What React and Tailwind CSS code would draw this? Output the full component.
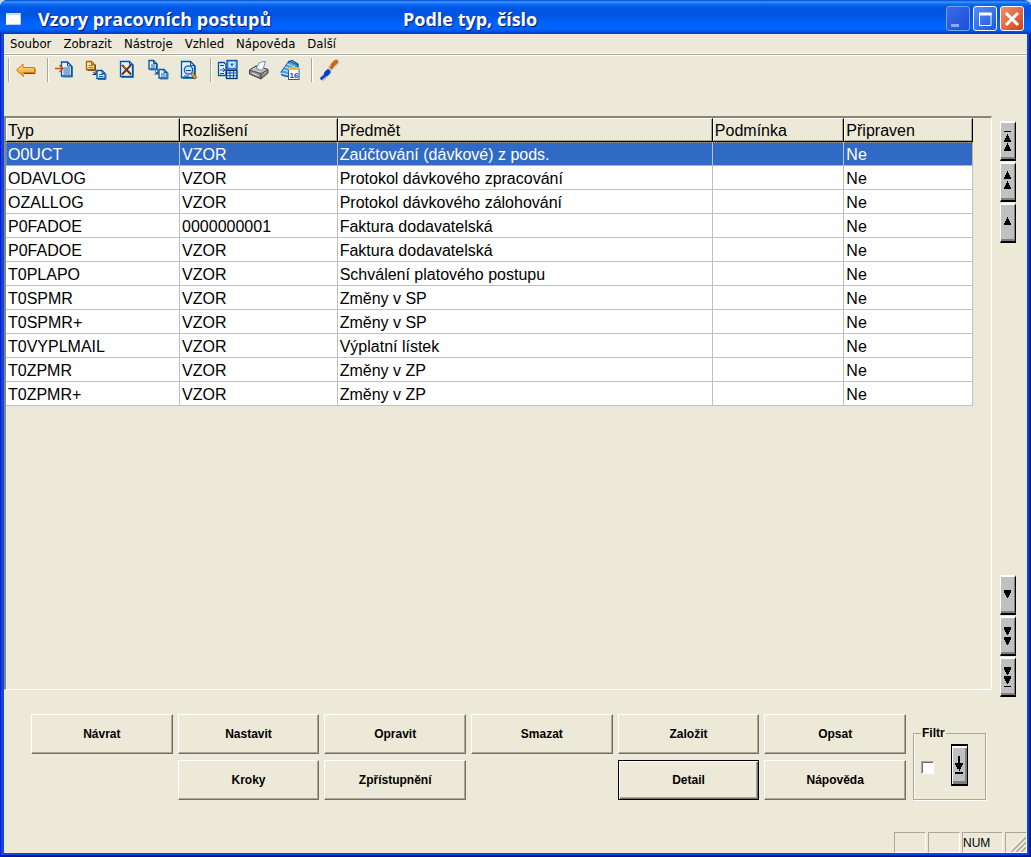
import React from 'react';

const MENU = ['Soubor', 'Zobrazit', 'Nástroje', 'Vzhled', 'Nápověda', 'Další'];

const COLUMNS = [
  { label: 'Typ', width: '18%' },
  { label: 'Rozlišení', width: '16.3%' },
  { label: 'Předmět', width: '38.8%' },
  { label: 'Podmínka', width: '13.6%' },
  { label: 'Připraven', width: '13.3%' },
];

const ROWS = [
  ['O0UCT', 'VZOR', 'Zaúčtování (dávkové) z pods.', '', 'Ne'],
  ['ODAVLOG', 'VZOR', 'Protokol dávkového zpracování', '', 'Ne'],
  ['OZALLOG', 'VZOR', 'Protokol dávkového zálohování', '', 'Ne'],
  ['P0FADOE', '0000000001', 'Faktura dodavatelská', '', 'Ne'],
  ['P0FADOE', 'VZOR', 'Faktura dodavatelská', '', 'Ne'],
  ['T0PLAPO', 'VZOR', 'Schválení platového postupu', '', 'Ne'],
  ['T0SPMR', 'VZOR', 'Změny v SP', '', 'Ne'],
  ['T0SPMR+', 'VZOR', 'Změny v SP', '', 'Ne'],
  ['T0VYPLMAIL', 'VZOR', 'Výplatní lístek', '', 'Ne'],
  ['T0ZPMR', 'VZOR', 'Změny v ZP', '', 'Ne'],
  ['T0ZPMR+', 'VZOR', 'Změny v ZP', '', 'Ne'],
];

const ACTIONS = [
  'Návrat', 'Nastavit', 'Opravit', 'Smazat', 'Založit', 'Opsat',
  null, 'Kroky', 'Zpřístupnění', null, 'Detail', 'Nápověda',
];

const Icon = ({ children }) => (
  <svg width="22" height="22" viewBox="0 0 22 22" fill="none" aria-hidden="true">
    {children}
  </svg>
);

// sheet of paper with a folded corner and text lines
const Sheet = ({ x, y, w, h, stroke = '#0a4fa8', fill = '#e4f2ff', shadow = '#2a8cb0', fold = 3, lines = 2 }) => (
  <g>
    <path d={`M${x + 1} ${y + h + 1}H${x + w + 1}V${y + fold}`} stroke={shadow} />
    <path
      d={`M${x} ${y}H${x + w - fold}L${x + w} ${y + fold}V${y + h}H${x}Z`}
      fill={fill}
      stroke={stroke}
      strokeWidth="1.3"
    />
    <path d={`M${x + w - fold} ${y}V${y + fold}H${x + w}`} stroke={stroke} />
    {Array.from({ length: lines }, (_, i) => (
      <path key={i} d={`M${x + 2} ${y + h - 2 - i * 2}H${x + w - 1.5}`} stroke={stroke} strokeWidth="0.9" />
    ))}
  </g>
);

const BackIcon = () => (
  <Icon>
    <defs>
      <linearGradient id="back" x1="0" y1="0" x2="0" y2="1">
        <stop offset="0" stopColor="#ffe08a" />
        <stop offset="1" stopColor="#ff9a10" />
      </linearGradient>
    </defs>
    <path d="M9 17.5L2.5 12M9 14.5H20V9.5" stroke="#7b4a12" />
    <path d="M1.5 11L8 5V8.5H19.5V13.5H8V17Z" fill="url(#back)" stroke="#d47b10" />
  </Icon>
);

const InsertIcon = () => (
  <Icon>
    <Sheet x={7.5} y={3} w={10} h={14} fold={4} lines={4} />
    <path d="M1 9.5H9M5.5 6L9 9.5L5.5 13" stroke="#c4501c" strokeWidth="1.5" />
  </Icon>
);

const CopyIcon = () => (
  <Icon>
    <Sheet x={1.5} y={2.5} w={8} h={8} stroke="#a8640c" fill="#ffe9a8" shadow="#7b4a12" />
    <Sheet x={12} y={11.5} w={8} h={8} />
    <path d="M8 13L11 15M11 11.5V15.5H7.5" stroke="#062e6c" />
  </Icon>
);

const DeleteIcon = () => (
  <Icon>
    <Sheet x={4.5} y={2.5} w={12} h={15} fold={3} lines={0} />
    <path d="M6 6L15 15.5M15 6L6 15.5" stroke="#6b3208" strokeWidth="2" />
    <path d="M6.5 6.5L10 10" stroke="#c4702c" />
  </Icon>
);

const MoveIcon = () => (
  <Icon>
    <Sheet x={2} y={1.5} w={7.5} h={8.5} />
    <Sheet x={12} y={10.5} w={8} h={8.5} />
    <path d="M8 12.5L11 14.5M11 11V15H7.5" stroke="#062e6c" />
  </Icon>
);

const PreviewIcon = () => (
  <Icon>
    <Sheet x={3.5} y={2.5} w={13} h={16} fold={4} lines={0} />
    <path d="M13.5 14L18 19.5" stroke="#8a4b08" strokeWidth="3" />
    <path d="M13.5 14L17.5 19" stroke="#ffb02c" strokeWidth="1.6" />
    <circle cx="10.5" cy="11" r="4.2" fill="#bfe4ff" stroke="#1560b8" strokeWidth="1.3" />
    <path d="M8 11.5H13M6 17H11" stroke="#0a4fa8" />
  </Icon>
);

const ModulesIcon = () => (
  <Icon>
    <path d="M1.5 3.5H7L9 5.5V16.5H1.5Z" fill="#e4f2ff" stroke="#0a4fa8" strokeWidth="1.3" />
    <path d="M3 6.5H7M3 14.5H7M3 11H7.5M6 9L8 11L6 13" stroke="#0a4fa8" />
    <rect x="10" y="1.5" width="10" height="8.5" fill="#86c4ff" stroke="#0a4fa8" strokeWidth="1.3" />
    <circle cx="15" cy="5.7" r="2.8" fill="#fff" />
    <path d="M13.5 5.5H16.5M15 4V7.5" stroke="#0a6bd6" strokeWidth="1.3" />
    <rect x="9.5" y="11.5" width="10.5" height="8" fill="#e4f2ff" stroke="#062e6c" strokeWidth="1.3" />
    <path d="M9.5 14H20M9.5 16.7H20M13 11.5V19.5M16.5 11.5V19.5" stroke="#0a4fa8" />
  </Icon>
);

const PrinterIcon = () => (
  <Icon>
    <path d="M1.5 11L8 7L20 10.5V14L13 20L1.5 15Z" fill="#8c8c8c" stroke="#3c3c3c" />
    <path d="M1.5 11L8 7L20 10.5L13 14.5Z" fill="#c8c8c8" stroke="#505050" />
    <path d="M8 9.5L11.5 3.5C13 4 14 2 17.5 2.5C16 5 17 7 14 11.5Z" fill="#f4faff" stroke="#5a8cb8" />
    <path d="M13 14.5V20" stroke="#3c3c3c" />
    <path d="M4 14L10.5 16.7" stroke="#e8e8e8" />
    <path d="M16 14.5L18 13" stroke="#e8c020" />
  </Icon>
);

const CalendarIcon = () => (
  <Icon>
    <path d="M2 13L10 2L19 6L13 18.5L3 16.5Z" fill="#4aa0dc" stroke="#0a4fa8" />
    <path d="M2 14L11 16M4 11L12 13M6 8L13 10M8 5L16 8" stroke="#d4ecff" />
    <path d="M9 3L13 1.5L19 5V9" stroke="#0a4f9c" strokeWidth="1.3" />
    <rect x="9.5" y="9.5" width="10.5" height="11" fill="#fff" stroke="#1560b8" />
    <rect x="9" y="8" width="11.5" height="3" fill="#f4b040" />
    <text x="15" y="19" textAnchor="middle" fontSize="8" fontWeight="bold" fontFamily="Liberation Sans, sans-serif" fill="#0a4fa8">16</text>
  </Icon>
);

const BrushIcon = () => (
  <Icon>
    <path d="M13 8.5L18.5 3" stroke="#c8c8cc" strokeWidth="5.5" strokeLinecap="round" />
    <path d="M5 19L10.5 13" stroke="#b8c0d4" strokeWidth="5.5" strokeLinecap="round" />
    <path d="M15 5.5L18 2.8" stroke="#d06400" strokeWidth="4" strokeLinecap="round" />
    <path d="M12.5 9.5L15 6.5" stroke="#d06400" strokeWidth="3" />
    <path d="M8.5 14.5L10 13" stroke="#0a3cd0" strokeWidth="5" strokeLinecap="round" />
    <path d="M3.5 19.5L9 15" stroke="#0a3cd0" strokeWidth="2.6" strokeLinecap="round" />
  </Icon>
);

const TOOL_GROUPS = [
  [['Zpět', BackIcon]],
  [['Vložit', InsertIcon], ['Kopírovat', CopyIcon], ['Zrušit', DeleteIcon], ['Přesunout', MoveIcon], ['Náhled', PreviewIcon]],
  [['Moduly', ModulesIcon], ['Tisk', PrinterIcon], ['Kalendář', CalendarIcon]],
  [['Barvy', BrushIcon]],
];

const WindowButton = ({ label, className, children }) => (
  <button
    aria-label={label}
    className={`flex h-[25px] w-6 items-center justify-center rounded-[3px] border ${className}`}
  >
    <svg width="22" height="22" viewBox="0 0 22 22" fill="none">{children}</svg>
  </button>
);

const TitleBar = () => (
  <header className="flex h-[34px] items-center gap-[3px] rounded-t-lg bg-[linear-gradient(180deg,#0046c8_0px,#3d95ff_2px,#0a6cf5_4px,#0055e5_8px,#0055e5_16px,#0062fa_23px,#0066ff_29px,#0056e8_31px,#0038b8_34px)] pr-[7px] pl-[6px] pt-[3px]">
    <svg width="15" height="12" viewBox="0 0 15 12" className="mr-[14px]" aria-hidden="true">
      <rect width="15" height="12" fill="#fff" />
      <rect width="15" height="2" fill="#cfe0fb" />
      <path d="M15 1V12H1" stroke="#7a9ad8" fill="none" />
    </svg>
    <h1 className="flex flex-1 font-['Open_Sans',sans-serif] text-lg font-bold leading-6 whitespace-pre text-white [text-shadow:1px_1px_1px_#0a1883]">
      <span className="w-[365px]">Vzory pracovních postupů</span>
      <span>Podle typ, číslo</span>
    </h1>
    <WindowButton label="Minimalizovat" className="border-[#7a9ff0] bg-linear-to-br from-[#3a6ae8] to-[#1a4fd8]">
      <path d="M4 17.5H12" stroke="#8fa9ee" strokeWidth="3" />
    </WindowButton>
    <WindowButton label="Maximalizovat" className="border-white bg-linear-to-br from-[#5a8cf4] to-[#1a55e0]">
      <path d="M5.5 5V17.5H17V5" stroke="#fff" />
      <path d="M5 6H17.5" stroke="#fff" strokeWidth="3" />
    </WindowButton>
    <WindowButton label="Zavřít" className="border-white bg-linear-to-br from-[#f0906c] to-[#d03c14]">
      <path d="M5 5L17 17M17 5L5 17" stroke="#fff" strokeWidth="3" />
    </WindowButton>
  </header>
);

const Separator = () => <div className="h-6 w-[2px] border-r border-l border-r-white border-l-[#aca899]" />;

const ToolBar = () => (
  <div className="flex items-center px-1 pt-[2px]">
    {TOOL_GROUPS.map((group, i) => (
      <React.Fragment key={i}>
        <Separator />
        <div className="flex pr-[6px]">
          {group.map(([label, Glyph]) => (
            <button key={label} title={label} aria-label={label} className="flex h-6 w-[31px] items-center justify-center">
              <Glyph />
            </button>
          ))}
        </div>
      </React.Fragment>
    ))}
  </div>
);

const ListTable = () => (
  <table className="w-full table-fixed border-separate border-spacing-0 text-base text-black">
    <colgroup>
      {COLUMNS.map((c) => <col key={c.label} style={{ width: c.width }} />)}
    </colgroup>
    <thead>
      <tr>
        {COLUMNS.map((c) => (
          <th
            key={c.label}
            className="h-6 border-t border-r border-b border-t-white border-r-black border-b-black bg-[#ece9d8] px-[2px] pt-[2px] pb-0 text-left leading-5 font-normal shadow-[inset_1px_0_#fff,inset_-1px_-1px_#aca899]"
          >
            {c.label}
          </th>
        ))}
      </tr>
    </thead>
    <tbody>
      {ROWS.map((row, i) => (
        <tr
          key={i}
          className={i === 0 ? 'bg-[#316ac5] text-white outline-1 -outline-offset-1 outline-dotted outline-[#e09a3a]' : 'bg-white'}
        >
          {row.map((cell, j) => (
            <td key={j} className="h-6 border-r border-b border-[#c0c0c0] px-[2px] pt-[2px] pb-0 leading-[21px] whitespace-nowrap">{cell}</td>
          ))}
        </tr>
      ))}
    </tbody>
  </table>
);

const UP = 'M4 0H5V2H6V4H7V6H8V8H1V6H2V4H3V2H4Z';
const SCROLL_UP = [
  ['Na začátek', <><path d="M1 8.5H8" stroke="#000" /><path transform="translate(0 11)" d={UP} /><path transform="translate(0 20)" d={UP} /></>],
  ['Stránka nahoru', <><path transform="translate(0 7)" d={UP} /><path transform="translate(0 17)" d={UP} /></>],
  ['Nahoru', <path transform="translate(0 12)" d={UP} />],
];
const DOWN = 'M1 0H8V3H7V5H6V7H5V8H4V7H3V5H2V3H1Z';
const SCROLL_DOWN = [
  ['Dolů', <path transform="translate(0 13)" d={DOWN} />],
  ['Stránka dolů', <><path transform="translate(0 9)" d={DOWN} /><path transform="translate(0 19)" d={DOWN} /></>],
  ['Na konec', <><path transform="translate(0 8)" d={DOWN} /><path transform="translate(0 17)" d={DOWN} /><path d="M1 27.5H8" stroke="#000" /></>],
];

const ScrollButtons = ({ items }) => (
  <div className="flex flex-col gap-px">
    {items.map(([label, glyph]) => (
      <button
        key={label}
        aria-label={label}
        className="flex h-10 w-4 border-t-2 border-r border-b-2 border-l border-t-white border-r-black border-b-black border-l-white bg-[#c0c0c0] pl-[2px] shadow-[inset_-1px_-2px_#808080]"
      >
        <svg width="9" height="36" viewBox="0 0 9 36" className="shrink-0" shapeRendering="crispEdges">{glyph}</svg>
      </button>
    ))}
  </div>
);

const ActionButton = ({ label }) => {
  const isDefault = label === 'Detail';
  return (
    <button
      className={`h-10 border text-xs font-bold text-black ${
        isDefault
          ? 'border-black shadow-[inset_1px_1px_#fff,inset_-1px_-1px_#716f64,inset_-2px_-2px_#aca899]'
          : 'border-t-white border-r-[#716f64] border-b-[#716f64] border-l-white shadow-[inset_-1px_-1px_#aca899]'
      }`}
    >
      {label}
    </button>
  );
};

const FilterBox = () => (
  <fieldset className="h-[75px] w-[73px] border border-[#aca899] px-[7px] shadow-[1px_1px_#fff,inset_1px_0_#fff]">
    <legend className="px-px text-xs leading-4 font-bold text-black">
      <label htmlFor="filter">Filtr</label>
    </legend>
    <div className="flex items-center justify-between pt-[3px] pr-[10px]">
      <input
        id="filter"
        type="checkbox"
        className="mt-1 size-[13px] appearance-none border border-t-[#aca899] border-r-white border-b-white border-l-[#aca899] bg-white shadow-[inset_1px_1px_#716f64] checked:bg-[#316ac5]"
      />
      <button
        aria-label="Nastavit filtr"
        className="flex h-[42px] w-[17px] items-center justify-center border-x border-y-2 border-black bg-[#c0c0c0] shadow-[inset_1px_2px_#fff,inset_-2px_-3px_#808080]"
      >
        <svg width="9" height="20" viewBox="0 0 9 20" shapeRendering="crispEdges">
          <path d="M3 1H5V8H8V10H7V12H6V14H5V16H4V14H2V12H1V10H0V8H3Z" />
          <path d="M0 18H8" stroke="#000" strokeWidth="2" />
        </svg>
      </button>
    </div>
  </fieldset>
);

const STATUS_CELL = 'h-[21px] border border-t-[#aca899] border-r-white border-b-white border-l-[#aca899]';

const StatusBar = () => (
  <footer className="flex justify-end gap-[2px] text-xs leading-5 text-black">
    <div className={`${STATUS_CELL} w-8`} />
    <div className={`${STATUS_CELL} w-8`} />
    <div className={`${STATUS_CELL} w-[41px]`}>NUM</div>
    <div className={`${STATUS_CELL} flex w-[22px] items-end justify-end`}>
      <svg width="15" height="15" viewBox="0 0 15 15" fill="none">
        <path d="M0 15L15 0M5 15L15 5M10 15L15 10" stroke="#aca899" strokeWidth="2" />
        <path d="M-1.5 15L15 -1.5M3.5 15L15 3.5M8.5 15L15 8.5" stroke="#fff" />
      </svg>
    </div>
  </footer>
);

const App = () => (
  <div className="bg-[#c4d8f4] font-['Liberation_Sans',sans-serif]">
    <div className="flex min-h-screen flex-col rounded-t-lg bg-[#0a48e0] shadow-[inset_1px_0_#0019cf,inset_-1px_-1px_#00138c,inset_-2px_-2px_#001ea0]">
      <TitleBar />
      <div className="mx-1 mb-1 flex flex-1 flex-col bg-[#ece9d8]">
        <nav className="flex h-[19px] gap-3 px-[6px] font-['DejaVu_Sans_Condensed','DejaVu_Sans',sans-serif] text-[13px] leading-5 text-black">
          {MENU.map((item) => <button key={item}>{item}</button>)}
        </nav>
        <div className="h-[3px] border-y border-white bg-[#aca899]" />
        <ToolBar />

        <main className="mt-[34px] flex flex-1">
          <div className="flex-1 border-t-2 border-r border-b border-l-2 border-t-[#8a877a] border-r-white border-b-white border-l-[#8a877a] pr-[18px]">
            <ListTable />
          </div>
          <div className="-mb-[7px] flex flex-col justify-between pt-[5px] pr-[11px] pl-2">
            <ScrollButtons items={SCROLL_UP} />
            <ScrollButtons items={SCROLL_DOWN} />
          </div>
        </main>

        <section className="mt-6 mb-8 flex gap-[7px] pr-[41px] pl-[27px]">
          <div className="grid flex-1 grid-cols-6 gap-x-[5px] gap-y-[6px]">
            {ACTIONS.map((label, i) => (label ? <ActionButton key={i} label={label} /> : <div key={i} />))}
          </div>
          <div className="pt-[11px]">
            <FilterBox />
          </div>
        </section>
        <StatusBar />
      </div>
    </div>
  </div>
);

export default App;
